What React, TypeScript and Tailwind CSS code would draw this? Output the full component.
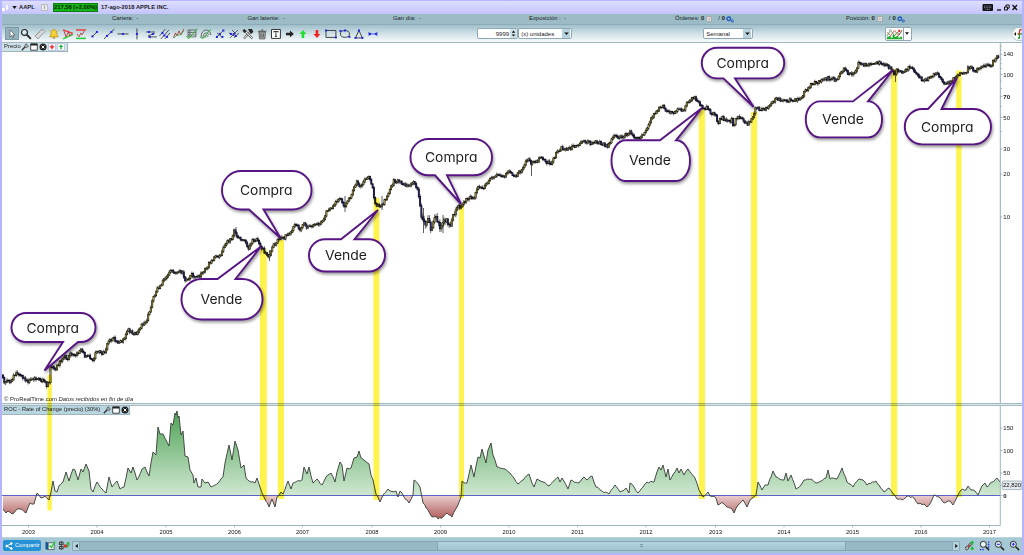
import { useMemo } from "react";
import type { ReactNode } from "react";

type Point = [number, number];

const PRICE: Point[] = [
  [3, 375], [5, 381], [12, 382], [17, 373], [25, 378], [30, 382], [35, 379], [45, 380], [48, 386], [51, 381],
  [52, 366], [57, 369], [63, 360], [67, 357], [68, 361], [72, 353], [77, 355], [82, 350], [86, 356], [90, 357],
  [94, 360], [98, 352], [106, 353], [109, 342], [115, 339], [120, 344], [125, 339], [129, 330], [135, 334], [139, 333],
  [142, 327], [148, 321], [151, 310], [154, 300], [158, 290], [162, 285], [167, 277], [173, 270], [177, 273], [181, 270],
  [184, 273], [186, 282], [193, 275], [197, 278], [202, 275], [208, 267], [215, 258], [222, 255], [227, 243], [233, 238],
  [236, 229], [238, 237], [245, 240], [250, 249], [253, 241], [258, 239], [262, 247], [267, 253], [270, 258], [273, 247],
  [280, 240], [290, 235], [297, 224], [301, 230], [305, 223], [308, 228], [318, 225], [323, 223], [328, 212], [333, 207],
  [341, 197], [345, 207], [352, 197], [358, 181], [362, 187], [365, 180], [371, 177], [374, 188], [376, 203], [382, 208],
  [388, 197], [395, 181], [402, 182], [410, 187], [415, 183], [418, 187], [421, 200], [423, 218], [427, 223], [429, 217],
  [432, 228], [437, 218], [442, 228], [447, 220], [452, 228], [453, 220], [458, 207], [463, 206], [470, 197], [475, 199],
  [478, 188], [485, 187], [490, 180], [497, 175], [505, 177], [510, 172], [515, 177], [520, 173], [525, 167], [529, 158],
  [532, 163], [537, 163], [542, 157], [547, 162], [553, 163], [558, 153], [563, 148], [570, 149], [578, 145], [585, 142],
  [593, 143], [600, 142], [609, 147], [615, 135], [620, 138], [625, 136], [631, 132], [635, 137], [642, 137], [648, 129],
  [653, 118], [660, 108], [664, 106], [668, 112], [673, 113], [680, 109], [685, 110], [688, 103], [695, 97], [700, 103],
  [705, 110], [708, 107], [712, 113], [717, 115], [719, 123], [723, 117], [728, 122], [733, 120], [735, 127], [737, 117],
  [743, 118], [748, 124], [753, 120], [757, 108], [763, 110], [770, 107], [777, 99], [787, 101], [802, 99], [807, 90],
  [813, 84], [823, 81], [830, 78], [838, 80], [845, 69], [850, 74], [856, 74], [860, 63], [867, 65], [878, 62],
  [888, 65], [893, 70], [896, 76], [898, 70], [905, 72], [910, 67], [915, 70], [918, 75], [925, 81], [932, 77],
  [938, 72], [944, 83], [952, 82], [957, 77], [961, 73], [967, 73], [970, 67], [977, 71], [983, 67], [992, 66],
  [995, 60], [999, 57],
];

const ROC: Point[] = [
  [3, 509], [6, 513], [8, 511], [12, 514], [16, 510], [20, 509], [26, 513], [30, 503], [34, 504], [37, 493],
  [41, 498], [45, 496], [49, 500], [51, 492], [53, 481], [55, 491], [57, 492], [59, 486], [63, 482], [66, 472],
  [69, 481], [73, 469], [75, 470], [78, 480], [81, 469], [83, 472], [86, 464], [89, 471], [91, 489], [93, 492],
  [97, 482], [102, 489], [106, 493], [109, 477], [112, 487], [117, 481], [120, 489], [124, 487], [128, 468], [131, 473],
  [133, 467], [135, 473], [137, 480], [142, 469], [145, 467], [149, 476], [151, 463], [153, 452], [156, 455], [158, 427],
  [160, 434], [163, 434], [169, 446], [171, 423], [173, 425], [175, 413], [176, 415], [177, 411], [178, 418], [179, 416],
  [181, 435], [183, 431], [185, 456], [188, 457], [190, 470], [193, 475], [194, 483], [196, 478], [198, 487], [201, 487],
  [202, 479], [205, 483], [208, 482], [211, 487], [218, 483], [223, 477], [225, 463], [229, 445], [232, 460], [235, 441],
  [238, 450], [241, 468], [244, 465], [246, 478], [251, 482], [255, 483], [257, 478], [260, 487], [264, 497], [269, 507],
  [272, 499], [275, 507], [277, 497], [281, 492], [283, 494], [288, 481], [291, 489], [293, 483], [302, 480], [304, 467],
  [307, 474], [309, 467], [313, 483], [317, 479], [322, 485], [326, 477], [331, 473], [335, 482], [337, 472], [340, 462],
  [342, 465], [344, 481], [347, 468], [351, 468], [354, 458], [357, 457], [359, 451], [361, 458], [365, 461], [369, 464],
  [371, 475], [373, 480], [376, 494], [380, 502], [383, 495], [388, 489], [390, 491], [396, 491], [398, 497], [400, 491],
  [404, 497], [409, 503], [413, 495], [414, 480], [420, 487], [423, 503], [428, 510], [432, 517], [437, 517], [438, 519],
  [443, 517], [447, 513], [452, 517], [457, 507], [461, 497], [462, 481], [467, 483], [471, 465], [474, 477], [478, 457],
  [480, 458], [482, 449], [486, 463], [488, 450], [491, 443], [493, 455], [497, 467], [505, 469], [510, 473], [514, 478],
  [518, 484], [523, 480], [529, 474], [532, 483], [534, 487], [537, 479], [543, 482], [549, 486], [558, 477], [560, 482],
  [562, 478], [568, 489], [571, 480], [578, 483], [584, 477], [587, 480], [592, 476], [596, 487], [602, 491], [609, 494],
  [615, 485], [620, 492], [626, 488], [629, 493], [630, 483], [634, 487], [638, 493], [643, 487], [647, 482], [654, 482],
  [659, 467], [661, 470], [663, 465], [666, 477], [668, 469], [670, 480], [677, 468], [679, 473], [681, 469], [684, 475],
  [688, 469], [695, 478], [699, 490], [703, 497], [708, 492], [710, 496], [716, 498], [718, 505], [723, 503], [727, 507],
  [732, 509], [734, 513], [738, 505], [743, 500], [747, 507], [750, 500], [756, 495], [758, 482], [762, 490], [765, 485],
  [768, 485], [773, 471], [776, 477], [784, 480], [786, 473], [788, 481], [791, 475], [796, 489], [801, 485], [804, 480],
  [811, 479], [817, 483], [826, 478], [828, 470], [830, 479], [837, 479], [842, 468], [847, 482], [853, 487], [859, 479],
  [863, 480], [867, 485], [876, 481], [884, 492], [889, 488], [892, 492], [897, 499], [902, 500], [907, 496], [914, 498],
  [918, 504], [924, 504], [927, 507], [931, 502], [934, 495], [939, 497], [944, 503], [950, 501], [953, 505], [957, 497],
  [961, 490], [966, 490], [968, 486], [971, 490], [975, 491], [978, 495], [982, 486], [985, 483], [987, 487], [992, 482],
  [997, 478], [1000, 482],
];

// Long wicks that stand out of the weekly series
const SPIKES: [number, number, number][] = [
  [531.5, 160, 176], [895.5, 70, 82], [382, 196, 210], [423.5, 208, 233], [345, 196, 212], [269.5, 250, 261], [236, 227, 236], [443, 215, 233],
];

const PRICE_TICKS = [
  { y: 54.3, label: "140" },
  { y: 74.5, label: "100" },
  { y: 96.5, label: "70", bold: true },
  { y: 117.5, label: "50" },
  { y: 149, label: "30" },
  { y: 174, label: "20" },
  { y: 217, label: "10" },
];
const MINOR_TICKS = [46, 50, 59, 63.5, 68.5, 81, 88.5, 106.5, 131.5];
const ROC_TICKS = [
  { y: 428, label: "150" },
  { y: 450.5, label: "100" },
  { y: 473, label: "50" },
];
const YEARS = [
  [28.5, "2003"], [97, "2004"], [166, "2005"], [234.5, "2006"], [302.5, "2007"], [372, "2008"], [440.5, "2009"], [509, "2010"],
  [577.5, "2011"], [646, "2012"], [715.5, "2013"], [784, "2014"], [852.5, "2015"], [921, "2016"], [989.5, "2017"],
] as const;

// x, top, width, bottom
const BANDS = [
  [47.4, 375, 4.4, 510.5], [260, 249, 6.8, 500], [277.8, 240, 6.2, 499], [373.4, 198, 6, 500], [459, 205, 5, 498],
  [698.8, 109, 6.2, 499], [751, 112, 6.2, 498], [891, 69, 6.2, 496], [956.2, 70.5, 5.4, 497],
];

type Bubble = {
  text: string;
  box: [number, number, number, number];
  tail: [number, number];
  tip: Point;
  up?: boolean;
  at: Point;
};

const BUBBLES: Bubble[] = [
  { text: "Compra", box: [11.5, 313, 95.5, 342], tail: [63, 78], tip: [44.5, 370.5], at: [26.5, 332.5] },
  { text: "Vende", box: [181.5, 279, 262.5, 319.5], tail: [217.5, 235.5], tip: [261, 246.5], up: true, at: [200.5, 303.8] },
  { text: "Compra", box: [222, 171, 311.5, 209.5], tail: [249, 263.5], tip: [280.5, 238], at: [240, 195.3] },
  { text: "Vende", box: [309, 239.2, 385, 271.5], tail: [341, 354.5], tip: [378, 210], up: true, at: [325, 260.3] },
  { text: "Compra", box: [410.5, 139, 492, 175.3], tail: [435, 447], tip: [461, 204], at: [425, 162] },
  { text: "Vende", box: [611.5, 140.3, 690, 181], tail: [660, 676], tip: [702, 108], up: true, at: [629, 165.3] },
  { text: "Compra", box: [701.8, 47.8, 784.2, 78.4], tail: [723.5, 735], tip: [753.7, 107], at: [716.5, 68] },
  { text: "Vende", box: [805.8, 101.4, 882, 137.4], tail: [853, 868], tip: [893, 70], up: true, at: [822, 124] },
  { text: "Compra", box: [904.8, 109, 991, 144.4], tail: [928, 941.5], tip: [957, 78], up: true, at: [921, 131.8] },
];

function noise(i: number) {
  const v = Math.sin(i * 127.1 + 31.7) * 43758.5453;
  return (v - Math.floor(v)) * 2 - 1;
}

function valueAt(points: Point[], x: number) {
  for (let i = 1; i < points.length; i++) {
    if (x <= points[i][0]) {
      const [x0, y0] = points[i - 1];
      const [x1, y1] = points[i];
      return y0 + ((y1 - y0) * (x - x0)) / (x1 - x0);
    }
  }
  return points[points.length - 1][1];
}

function bubblePath({ box: [l, t, r, b], tail: [a, c], tip, up }: Bubble) {
  const q = Math.min((b - t) / 2, up ? r - c : 99);
  const top = up ? `M${l + q} ${t}H${a}L${tip[0]} ${tip[1]}L${c} ${t}H${r - q}` : `M${l + q} ${t}H${r - q}`;
  const bottom = up ? `H${l + q}` : `H${c}L${tip[0]} ${tip[1]}L${a} ${b}H${l + q}`;
  const ry = (b - t) / 2;
  return `${top}A${q} ${ry} 0 0 1 ${r - q} ${b}${bottom}A${q} ${ry} 0 0 1 ${l + q} ${t}Z`;
}

function PriceChart() {
  const { wicks, bodies, ups, downs } = useMemo(() => {
    let wicks = "";
    let bodies = "";
    let ups = "";
    let downs = "";
    const step = 1.32;
    let open = valueAt(PRICE, 3);
    for (let i = 0; 3 + i * step < 999; i++) {
      const x = 3 + i * step;
      const amp = x < 150 ? 1.7 : x > 420 && x < 456 ? 3 : 1.5;
      const close = valueAt(PRICE, x + step) + noise(i) * amp;
      const lo = Math.max(open, close);
      const hi = Math.min(open, close);
      const px = x.toFixed(1);
      wicks += `M${px} ${(hi - 0.7 - Math.abs(noise(i + 900)) * amp).toFixed(1)}V${(lo + 0.7 + Math.abs(noise(i + 400)) * amp).toFixed(1)}`;
      bodies += `M${px} ${(hi - 0.6).toFixed(1)}V${(lo + 0.6).toFixed(1)}`;
      const seg = `M${px} ${hi.toFixed(1)}V${lo.toFixed(1)}`;
      if (close < open) ups += seg;
      else downs += seg;
      open = close;
    }
    return { wicks, bodies, ups, downs };
  }, []);

  return (
    <svg className="block h-[360px] w-[1020px] shrink-0" viewBox="2 43 1020 360">
      <path d={wicks} stroke="#444" strokeWidth={0.8} />
      {SPIKES.map(([x, a, b]) => (
        <path key={x} d={`M${x} ${a}V${b}`} stroke="#333" strokeWidth={0.8} />
      ))}
      <path d={bodies} stroke="#0c0c0c" strokeWidth={1.9} />
      <path d={ups} stroke="#b5a93c" strokeWidth={0.85} />
      <path d={downs} stroke="#2a2a8c" strokeWidth={0.85} />
      <path d="M1000.3 43V403" stroke="#93adb8" strokeWidth={1} />
      {MINOR_TICKS.map((y) => (
        <path key={y} d={`M1000 ${y}h2`} stroke="#93adb8" strokeWidth={0.7} />
      ))}
      {PRICE_TICKS.map(({ y, label, bold }) => (
        <g key={label}>
          <path d={`M1000 ${y}h2.5`} stroke="#93adb8" strokeWidth={0.8} />
          <text x={1003.3} y={y + 2.1} fontSize={6} fontWeight={bold ? 700 : 400} fill="#111">
            {label}
          </text>
        </g>
      ))}
    </svg>
  );
}

function RocChart() {
  const line = useMemo(() => {
    let d = "";
    ROC.forEach(([x, y], i) => {
      if (i === 0) {
        d += `M${x} ${y}`;
        return;
      }
      const [px, py] = ROC[i - 1];
      // rough up the longer segments so they read as weekly data
      const n = Math.floor((x - px) / 1.6);
      for (let k = 1; k < n; k++) {
        const t = k / n;
        d += `L${(px + (x - px) * t).toFixed(1)} ${(py + (y - py) * t + noise(i * 7 + k)).toFixed(1)}`;
      }
      d += `L${x} ${y}`;
    });
    return d;
  }, []);
  const area = `${line}V495.3H3Z`;

  return (
    <svg className="block h-[131px] w-[1020px] shrink-0" viewBox="2 406 1020 131">
      <defs>
        <linearGradient id="gain" gradientUnits="userSpaceOnUse" x1="0" x2="0" y1="411" y2="495">
          <stop offset="0" stopColor="#4fa356" />
          <stop offset="1" stopColor="#cfe7d1" />
        </linearGradient>
        <linearGradient id="loss" gradientUnits="userSpaceOnUse" x1="0" x2="0" y1="495" y2="520">
          <stop offset="0" stopColor="#ebd0d0" />
          <stop offset="1" stopColor="#ad5555" />
        </linearGradient>
        <clipPath id="above">
          <path d="M2 400H1000V495.3H2Z" />
        </clipPath>
        <clipPath id="below">
          <path d="M2 495.3H1000V530H2Z" />
        </clipPath>
      </defs>
      <path d={area} fill="url(#gain)" clipPath="url(#above)" />
      <path d={area} fill="url(#loss)" clipPath="url(#below)" />
      <path d="M2 495.5H1000" stroke="#5b62c8" strokeWidth={1} />
      <path d={line} fill="none" stroke="#3c423c" strokeWidth={0.95} strokeLinejoin="round" />
      <path d="M1000.3 406V525.5H2" fill="none" stroke="#93adb8" strokeWidth={0.9} />
      {ROC_TICKS.map(({ y, label }) => (
        <g key={label}>
          <path d={`M1000 ${y}h2.5`} stroke="#93adb8" strokeWidth={0.8} />
          <text x={1003.3} y={y + 2.1} fontSize={6} fill="#111">
            {label}
          </text>
        </g>
      ))}
      <path d="M1000 485.5h2.5M1000 495.4h2.5" stroke="#93adb8" strokeWidth={0.8} />
      <rect x={1002.3} y={481} width={19.5} height={8.6} rx={1} fill="#e4eaed" stroke="#8ba0aa" strokeWidth={0.7} />
      <text x={1003} y={487.4} fontSize={6} fill="#111" textLength={18}>
        22,820
      </text>
      <text x={1003.3} y={497.6} fontSize={6} fontWeight={700} fill="#111">
        0
      </text>
      {YEARS.map(([x, label]) => (
        <g key={label}>
          <path d={`M${x} 525.5v2`} stroke="#93adb8" strokeWidth={0.8} />
          <text x={x} y={534} fontSize={5.8} fill="#111" textAnchor="middle">
            {label}
          </text>
        </g>
      ))}
    </svg>
  );
}

function Highlights() {
  return (
    <svg className="pointer-events-none absolute inset-0 mix-blend-multiply" width={1020} height={494} viewBox="2 43 1020 494">
      {BANDS.map(([x, top, w, bottom]) => (
        <rect key={x} x={x} y={top} width={w} height={bottom - top} fill="#fff34d" />
      ))}
    </svg>
  );
}

function Bubbles() {
  return (
    <svg className="pointer-events-none absolute inset-0" width={1020} height={494} viewBox="2 43 1020 494">
      <g className="drop-shadow-[1px_2px_1.5px_rgba(0,0,0,0.4)]">
        {BUBBLES.map((b) => (
          <path key={b.at[0]} d={bubblePath(b)} fill="#fff" stroke="#571485" strokeWidth={1.9} />
        ))}
      </g>
      {BUBBLES.map((b) => (
        <text
          key={b.at[0]}
          x={b.at[0]}
          y={b.at[1]}
          textLength={b.text === "Compra" ? 52.5 : 42}
          lengthAdjust="spacingAndGlyphs"
          className="fill-[#1c1c1c] font-['Inter',sans-serif] text-[13px] font-normal [font-feature-settings:'cv11'_1]"
        >
          {b.text}
        </text>
      ))}
    </svg>
  );
}

function Icon({ children }: { children: ReactNode }) {
  return (
    <svg viewBox="0 0 14 14" fill="none" className="block size-[13.88px] shrink-0">
      {children}
    </svg>
  );
}

const dots = (pts: Point[]) => pts.map(([x, y]) => <rect key={`${x}-${y}`} x={x - 1} y={y - 1} width={2} height={2} fill="#2222ee" />);
const ink = "#333";

function DrawingTools() {
  return (
    <div className="flex items-center">
      <div className="flex h-[13px] w-[13.9px] items-center justify-center border border-[#7e9aa5] bg-[#93b2bd]">
        <Icon>
          <path d="M5 3v7l1.7-1.5 1.2 2.5 1-.5L7.7 8H10Z" fill="#fff" stroke="#555" strokeWidth={0.7} />
        </Icon>
      </div>
      <Icon>
        <circle cx={5.5} cy={5.5} r={3} fill="#d7eaf2" stroke="#222" strokeWidth={1.2} />
        <path d="m8 8 4 4" stroke="#222" strokeWidth={1.8} />
      </Icon>
      <Icon>
        <path d="m2 9 7.5-7L12 4.500 5 12Z" fill="#ddd" stroke="#777" strokeWidth={0.7} />
        <path d="m4.500 7 1 1M6.500 5.200l1 1M8.500 3.500l1 1" stroke="#777" strokeWidth={0.6} />
      </Icon>
      <Icon>
        <path d="M7 2.500c-3 0-3 3.500-3.200 5.500L2.500 10h9l-1.300-2C10 6 10 2.500 7 2.500Z" fill="#f2cf36" stroke="#a98212" strokeWidth={0.6} />
        <path d="M5.700 10.500h2.600v1.200H5.700z" fill="#a98212" />
        <path d="m2 3 1 1.500M12 3l-1 1.500" stroke="#d1a51c" strokeWidth={0.7} />
      </Icon>
      <Icon>
        <path d="M2 3 12 6.500" stroke="#e33" strokeWidth={1.3} />
        <path d="m2 12 10-4.500" stroke="#2c3" strokeWidth={1.4} />
        <path d="m3 4 2 6 2.500-5 1.500 4 2-2" stroke="#b33" strokeWidth={0.9} />
      </Icon>
      <Icon>
        <path d="M2 3h10" stroke="#e33" strokeWidth={1.4} />
        <path d="M2 11.500h10" stroke="#2c3" strokeWidth={1.5} />
        <path d="m3 7 2 3 2-4 1 2 2.500-4" stroke="#a44" strokeWidth={0.9} />
      </Icon>
      <Icon>
        <path d="m4 10 5-5" stroke={ink} strokeWidth={0.9} />
        {dots([[4.5, 9.5], [9, 5]])}
      </Icon>
      <Icon>
        <path d="M2 12 12.500 2" stroke={ink} strokeWidth={0.9} />
        {dots([[5, 9], [9.5, 5]])}
      </Icon>
      <Icon>
        <path d="M1.500 7h11" stroke={ink} strokeWidth={0.9} />
        {dots([[7, 7]])}
      </Icon>
      <Icon>
        <path d="M7 1.500v11" stroke={ink} strokeWidth={0.9} />
        {dots([[7, 7]])}
      </Icon>
      <Icon>
        <path d="M2 5h9M4 10h9M4 9l7-3" stroke={ink} strokeWidth={0.8} />
        {dots([[5, 5], [9, 7], [6, 10]])}
      </Icon>
      <Icon>
        <path d="m1.500 9 6-7M3 12l8-9M7 12l5-6" stroke={ink} strokeWidth={0.8} />
        {dots([[4.5, 6], [6.5, 8.5], [9, 10]])}
      </Icon>
      <Icon>
        <path d="m1.500 11 2-5 1.500 3 2-5 2 4 3-6" stroke="#a33" strokeWidth={0.9} />
        <path d="m2 11 3-3 3 0 4-4" stroke="#3a4" strokeWidth={0.8} />
      </Icon>
      <Icon>
        <path d="M3 3h8v7H3zM3 5.500h8M3 8h8M5 3v7" stroke="#444" strokeWidth={0.7} />
        <path d="m1.500 9 2 3L12.500 1.500" stroke="#3b3" strokeWidth={1} />
      </Icon>
      <Icon>
        <path d="M2 11C2 1 11 1 12 8M4 11c0-6 5-6 6-3M6 11c0-3 3-3 3-1" stroke="#444" strokeWidth={0.8} />
        <path d="m1.500 10 2 2L12 2" stroke="#3b3" strokeWidth={1} />
      </Icon>
      <Icon>
        <path d="m3 11 8-8M4 6l5 4" stroke={ink} strokeWidth={0.8} />
        {dots([[4, 10], [7, 7], [10.5, 3.5], [9.5, 10]])}
      </Icon>
      <Icon>
        <path d="m3 11 8-8M2 6l7 4M7 11l5-5M5 3l4 4" stroke={ink} strokeWidth={0.8} />
        {dots([[4, 7], [7, 7], [9, 9]])}
      </Icon>
      <Icon>
        <path d="m3 11.500 6-6.500" stroke="#666" strokeWidth={2.2} />
        <path d="m3 11.500 6-6.500" stroke="#eee" strokeWidth={1} />
        <path d="m4 4 7.500 7.500" stroke="#666" strokeWidth={2.2} />
        <path d="m4 4 7.500 7.500" stroke="#eee" strokeWidth={1} />
        <path d="M7 2h4l1.500 3-2.500 2ZM1.500 3.500l2-1.500L5.500 4l-2 2Z" fill="#222" />
      </Icon>
      <Icon>
        <path d="M4 5h6.500L10 12H4.500Z" fill="#aaa" stroke="#444" strokeWidth={0.7} />
        <path d="M3 4.300h8.500M6 3h2.500M6 6.500v4M8.300 6.500v4" stroke="#444" strokeWidth={0.9} />
      </Icon>
      <Icon>
        <path d="M2.500 2.500h9v9h-9z" fill="#fff" stroke="#333" strokeWidth={1} />
        <path d="M4.800 5.500v-1h4.400v1M7 4.500v5M6 9.500h2" stroke="#222" strokeWidth={0.9} />
      </Icon>
      <Icon>
        <path d="M3 5.800h4V3.600L11 7l-4 3.400V8.200H3Z" fill="#222" />
      </Icon>
      <Icon>
        <path d="M7 3l3.500 4H8.300v4H5.700V7H3.500Z" fill="#22dd33" />
      </Icon>
      <Icon>
        <path d="M7 11 3.500 7h2.200V3h2.600v4h2.200Z" fill="#f02222" />
      </Icon>
      <Icon>
        <path d="M2 3.500h10v7H2z" stroke={ink} strokeWidth={0.9} />
        {dots([[2, 3.5], [12, 10.5]])}
      </Icon>
      <Icon>
        <ellipse cx={7} cy={7} rx={4.6} ry={3.4} stroke={ink} strokeWidth={0.9} />
        {dots([[2.5, 4], [7, 3.5], [11.5, 10]])}
      </Icon>
      <Icon>
        <path d="M7 3.500 10.500 11h-7Z" stroke={ink} strokeWidth={0.9} />
        {dots([[7, 3.5], [3.5, 11], [10.5, 11]])}
      </Icon>
      <Icon>
        <path d="M3 7h8M3 5v4M11 5v4" stroke="#2233dd" strokeWidth={0.8} />
        {dots([[4, 7], [10, 7]])}
      </Icon>
    </div>
  );
}

function PanelIcons() {
  return (
    <>
      <svg viewBox="0 0 8 8" fill="none" className="block size-2 shrink-0">
        <path d="m.8 7.200 3.700-3.700" stroke="#333" strokeWidth={1.4} />
        <path d="M6.200 1.100a1.700 1.700 0 1 0 1.100 1.700L5.700 3.200 5 2.300Z" fill="#fff" stroke="#333" strokeWidth={0.7} />
      </svg>
      <svg viewBox="0 0 8 8" className="block size-2 shrink-0">
        <path d="M.7.8h6.600v6.400H.7z" fill="#fff" stroke="#222" strokeWidth={0.8} />
        <path d="M.7.8h6.600v1.700H.7z" fill="#222" />
      </svg>
      <svg viewBox="0 0 8 8" className="block size-2 shrink-0">
        <circle cx={4} cy={4} r={3.5} fill="#222" />
        <path d="m2.600 2.600 2.800 2.800m0-2.800L2.600 5.400" stroke="#fff" strokeWidth={1} />
      </svg>
    </>
  );
}

function Badge({ color, up }: { color: string; up?: boolean }) {
  return (
    <svg viewBox="0 0 8 8" className="block size-2 shrink-0">
      <path d="M.6.6h6.800v6.800H.6z" fill="#fff" stroke="#aac" strokeWidth={0.6} />
      <path d={up ? "M4 1.500 6.300 4H4.700v2.300H3.300V4H1.700Z" : "M3.300 1.700h1.400v1.500h1.500v1.400H4.700v1.600H3.300V4.600H1.800V3.200h1.500Z"} fill={color} />
    </svg>
  );
}

function Caret() {
  return (
    <span className="flex h-[9px] w-2 items-center justify-center bg-[#b6d2de]">
      <svg viewBox="0 0 6 4" className="block h-[3px] w-[5px]">
        <path d="M0 .5h6L3 4Z" fill="#111" />
      </svg>
    </span>
  );
}

function OrderCount({ label }: { label: string }) {
  return (
    <div className="flex items-center">
      {label}&nbsp; <b>0</b>
      <span className="ml-0.5 flex size-[6px] items-center justify-center border border-[#aaa] bg-[#ddd] text-[4px] text-[#888]">x</span>
      <span className="ml-1.5">/</span>
      <b className="ml-[2px]">0</b>
      <svg viewBox="0 0 8 7" className="ml-px block h-[7px] w-2" fill="none">
        <circle cx={2.8} cy={2.8} r={1.8} stroke="#1c55c0" strokeWidth={1.3} />
        <circle cx={6.3} cy={5} r={1.1} stroke="#1c55c0" strokeWidth={0.9} />
      </svg>
    </div>
  );
}

function TitleBar() {
  return (
    <div className="flex h-[14px] shrink-0 items-center border-t border-[#b4b4ff] bg-linear-to-b from-[#dedeff] to-[#c4c4ff] pr-1 font-bold text-[#222]">
      <svg viewBox="0 0 10 8" className="block h-2 w-[9px]">
        <path d="M0 4h3v3.500H0zM4.500 1h2v5h-2z" fill="#fff" />
      </svg>
      <svg viewBox="0 0 6 4" className="ml-[1px] block h-[3px] w-[5px]">
        <path d="M0 0h6L3 4Z" fill="#111" />
      </svg>
      <span className="ml-[2px] w-[17px] text-[5.8px]">AAPL</span>
      <span className="ml-[5px] flex size-[7px] items-center justify-center border border-[#bbb] bg-[#eee] text-[5px] text-[#777]">i</span>
      <span className="ml-[5px] flex h-[9px] w-[45px] items-center justify-center border border-[#0c7d12] bg-[#17b41c] text-[5.8px] whitespace-nowrap text-[#031c03]">
        217,58 (+2,00%)
      </span>
      <span className="ml-[3px] text-[5.8px] whitespace-nowrap">17-ago-2018 APPLE INC.</span>
      <svg viewBox="0 0 36 9" className="ml-auto block h-[9px] w-9" fill="none">
        <rect x={0.5} y={1} width={10.5} height={7} rx={1} fill="#111" />
        <path d="M2 3h7.500M2 4.700h7.500M3.500 6.400h4.500" stroke="#cdcdff" strokeWidth={0.6} strokeDasharray="1 .6" />
        <path d="M15 7h4" stroke="#111" strokeWidth={1.3} />
        <path d="M22.500 4h3v3h-3zM24 4V2h3.200v3.200H25.500" stroke="#111" strokeWidth={1} />
        <path d="m30.500 2 4.500 5m0-5-4.500 5" stroke="#111" strokeWidth={1.3} />
      </svg>
    </div>
  );
}

function InfoBar() {
  return (
    <div className="grid h-[11px] shrink-0 grid-cols-[135.5px_145.5px_136px_146px_171px_1fr] items-center border-b border-[#8cadb8] bg-[#9bbbc7] pl-[110px] text-[5.9px] whitespace-nowrap text-[#222]">
      <span>Cartera:&nbsp; -</span>
      <span>Gan latente:&nbsp; -</span>
      <span>Gan día:&nbsp; -</span>
      <span>Exposición :&nbsp; -</span>
      <OrderCount label="Órdenes:" />
      <OrderCount label="Posición:" />
    </div>
  );
}

function Toolbar() {
  return (
    <div className="flex h-[18px] shrink-0 items-center border-b border-[#9db5bf] bg-linear-to-b from-[#9fbfcb] via-[#cfe0e6] to-[#f8fbfc] pl-[3px] text-[6px] text-[#222]">
      <DrawingTools />
      <div className="ml-[97.5px] flex h-[11px] w-[41px] shrink-0 items-center justify-end rounded-[2px] border border-[#8fa8b3] bg-white">
        9999
        <svg viewBox="0 0 8 9" className="ml-px block h-[9px] w-[7px] bg-[#cfe1e9]">
          <path d="M4 1 6 3.500H2ZM4 8 2 5.500h4Z" fill="#111" />
        </svg>
      </div>
      <div className="flex h-[11px] w-[54px] shrink-0 items-center justify-between rounded-[2px] border border-[#8fa8b3] bg-white pr-px pl-[2px]">
        (x) unidades
        <Caret />
      </div>
      <div className="ml-[131px] flex h-[11px] w-[50px] shrink-0 items-center justify-between rounded-[2px] border border-[#8fa8b3] bg-white pr-px pl-[2px]">
        Semanal
        <Caret />
      </div>
      <div className="ml-[131.5px] flex h-[14px] w-[27px] shrink-0 items-center rounded-[2px] border border-[#8fa8b3] bg-white">
        <svg viewBox="0 0 18 12" className="block h-3 w-[18px] border-r border-[#8fa8b3]" fill="none">
          <path d="M1 11.500V9h2V8h2v2h2V7h2v2h2V8h2v2h2V9h2v2.500Z" fill="#1fae2c" />
          <path d="m1 8 4-6 4 6 3-4 2 3 3-5" stroke="#3b9b48" strokeWidth={1} />
          <path d="m1 4 4 4 4-6 4 6 4-6" stroke="#d45a4c" strokeWidth={0.9} />
          <path d="M3 1h3v3H3z" fill="#b8c6cc" />
          <path d="M13 1.500h2V4h-2z" fill="#d22" />
        </svg>
        <svg viewBox="0 0 6 4" className="mx-auto block h-[3px] w-[4px]">
          <path d="M0 0h6L3 4Z" fill="#111" />
        </svg>
      </div>
      <svg viewBox="0 0 9 14" className="ml-auto block h-[14px] w-[9px]" fill="none">
        <path d="M9 .5H6A6.500 6.500 0 0 0 6 13.500h3Z" fill="#fff" stroke="#9db5bf" strokeWidth={0.7} />
        <path d="M3 5v4L1 7Z" fill="#111" />
        <path d="M8.500 2.500C6 2.500 6.500 4.500 6.500 7H4.500" stroke="#d22" strokeWidth={1.3} />
        <path d="M6.500 6.800h2.500M6.500 7v4H5" stroke="#1a9a2c" strokeWidth={1.3} />
      </svg>
    </div>
  );
}

function Magnifier({ children }: { children?: ReactNode }) {
  return (
    <svg viewBox="0 0 12 12" className="block size-[11px]" fill="none">
      <circle cx={4.7} cy={4.7} r={3.3} fill="#e6f1f5" stroke="#222" strokeWidth={1} />
      <path d="m7.300 7.300 3.700 3.700" stroke="#222" strokeWidth={1.7} />
      {children}
    </svg>
  );
}

function BottomBar() {
  return (
    <div className="flex h-4 shrink-0 items-center border-t border-[#b9d6e0] bg-[#a6c8d5] pl-[1px]">
      <button className="flex h-[11px] w-[38px] items-center gap-[2px] rounded-[2px] bg-[#2592d6] pl-[2px] text-[5.6px] text-white">
        <svg viewBox="0 0 8 8" className="block size-2 shrink-0" fill="#fff" stroke="#fff">
          <path d="M6.300 1.500 1.800 4l4.500 2.500" fill="none" strokeWidth={0.9} />
          <circle cx={6.3} cy={1.5} r={0.9} />
          <circle cx={1.8} cy={4} r={0.9} />
          <circle cx={6.3} cy={6.5} r={0.9} />
        </svg>
        Compartir
      </button>
      <svg viewBox="0 0 12 12" className="ml-[4px] block size-[11px]" fill="none">
        <path d="M.5 1.500 3.500 3v8l-3-1Z" fill="#165a9a" />
        <path d="M3.500 3H10v7.500H3.500Z" fill="#eef4ee" stroke="#345" strokeWidth={0.8} />
        <path d="m5 6 2 2 4-6.500" stroke="#22cc33" strokeWidth={1.5} />
      </svg>
      <svg viewBox="0 0 14 12" className="ml-[2px] block h-[11px] w-[13px]" fill="none">
        <path d="M1.500 2.500h4V5h-4zM1.500 7h4v2.500h-4zM3.500 1v10" stroke="#444" strokeWidth={1.1} />
        <circle cx={8} cy={6.5} r={2} fill="#dd2a2a" />
        <path d="M9.500 2.500c2.500-2 4 1 2.500 4l-2.500 3Z" fill="#3db54a" />
      </svg>
      <div className="ml-[1px] flex h-[10px] w-2 items-center justify-center rounded-[1px] border border-[#86a7b4] bg-[#b4d2dd]">
        <svg viewBox="0 0 4 6" className="h-[4px] w-[3px]">
          <path d="M4 0v6L0 3Z" fill="#111" />
        </svg>
      </div>
      <div className="flex h-[10px] w-[872px] border-y border-[#84a6b4] bg-[#97b9c6] pl-[357px]">
        <div className="flex h-full w-[409px] items-center justify-center border-x border-[#84a6b4] bg-linear-to-b from-[#b2d3df] to-[#a0c3d1]">
          <span className="h-[3px] w-[3px] border-y border-[#7897a4]" />
        </div>
      </div>
      <div className="flex h-[10px] w-2 items-center justify-center rounded-[1px] border border-[#86a7b4] bg-[#b4d2dd]">
        <svg viewBox="0 0 4 6" className="h-[4px] w-[3px]">
          <path d="M0 0v6L4 3Z" fill="#111" />
        </svg>
      </div>
      <div className="ml-[4px] flex gap-[4px]">
        <svg viewBox="0 0 12 12" className="block size-[11px]" fill="none">
          <path d="M1.500 9a2 2 0 0 1 2-2l4-4.500 1.500 1.500-4 4.500a2 2 0 0 1-3.500 1.500" fill="#bbb" stroke="#333" strokeWidth={1} />
          <path d="m4.500 7.500 2-2" stroke="#d22" strokeWidth={1.2} />
          <path d="M9 .5 11.500 3.200H10v2H8v-2H6.500Z" fill="#22b833" />
          <path d="M9 11.500 11.500 9H10V7H8v2H6.500Z" fill="#22b833" />
        </svg>
        <Magnifier>
          <path d="M10.500 1.500v8M1 10.500h5" stroke="#22e" strokeWidth={1.4} strokeDasharray="1.5 1.2" />
        </Magnifier>
        <Magnifier>
          <path d="M3 4.700h3.400" stroke="#22e" strokeWidth={1.2} />
        </Magnifier>
        <Magnifier>
          <path d="M3 4.700h3.400M4.700 3v3.400" stroke="#22e" strokeWidth={1.2} />
        </Magnifier>
      </div>
    </div>
  );
}

export default function App() {
  return (
    <div className="flex h-[555px] w-[1024px] flex-col overflow-hidden border-x-2 border-b-2 border-[#b4b4ff] bg-white font-['Liberation_Sans',Arial,sans-serif] leading-none">
      <TitleBar />
      <InfoBar />
      <Toolbar />
      <div className="relative isolate flex h-[494px] shrink-0 flex-col bg-white">
        <PriceChart />
        <div className="h-[3px] w-full shrink-0 border-y border-[#a3b9c2] bg-[#dde6e9]" />
        <RocChart />
        <div className="absolute top-0 left-0 flex h-[9px] w-[66px] items-center gap-[1px] border-r border-b border-[#9db5bf] bg-[#cfe2e9] pl-[2px] text-[5.9px] text-[#222]">
          <span className="w-[16px]">Precio</span>
          <PanelIcons />
          <Badge color="#e22" />
          <Badge color="#1b3" up />
        </div>
        <div className="absolute top-[363px] left-0 flex h-[9px] w-[128px] items-center gap-[1px] border-r border-b border-[#9db5bf] bg-[#b9d5df] pl-[2px] text-[5.75px] whitespace-nowrap text-[#222]">
          <span className="w-[98px] shrink-0">ROC - Rate of Change (precio) (30%)</span>
          <PanelIcons />
        </div>
        <p className="absolute top-[354px] left-[2px] text-[5.9px] whitespace-nowrap text-[#222]">
          © ProRealTime.com <i>Datos recibidos en fin de día</i>
        </p>
        <Highlights />
        <Bubbles />
      </div>
      <BottomBar />
    </div>
  );
}
